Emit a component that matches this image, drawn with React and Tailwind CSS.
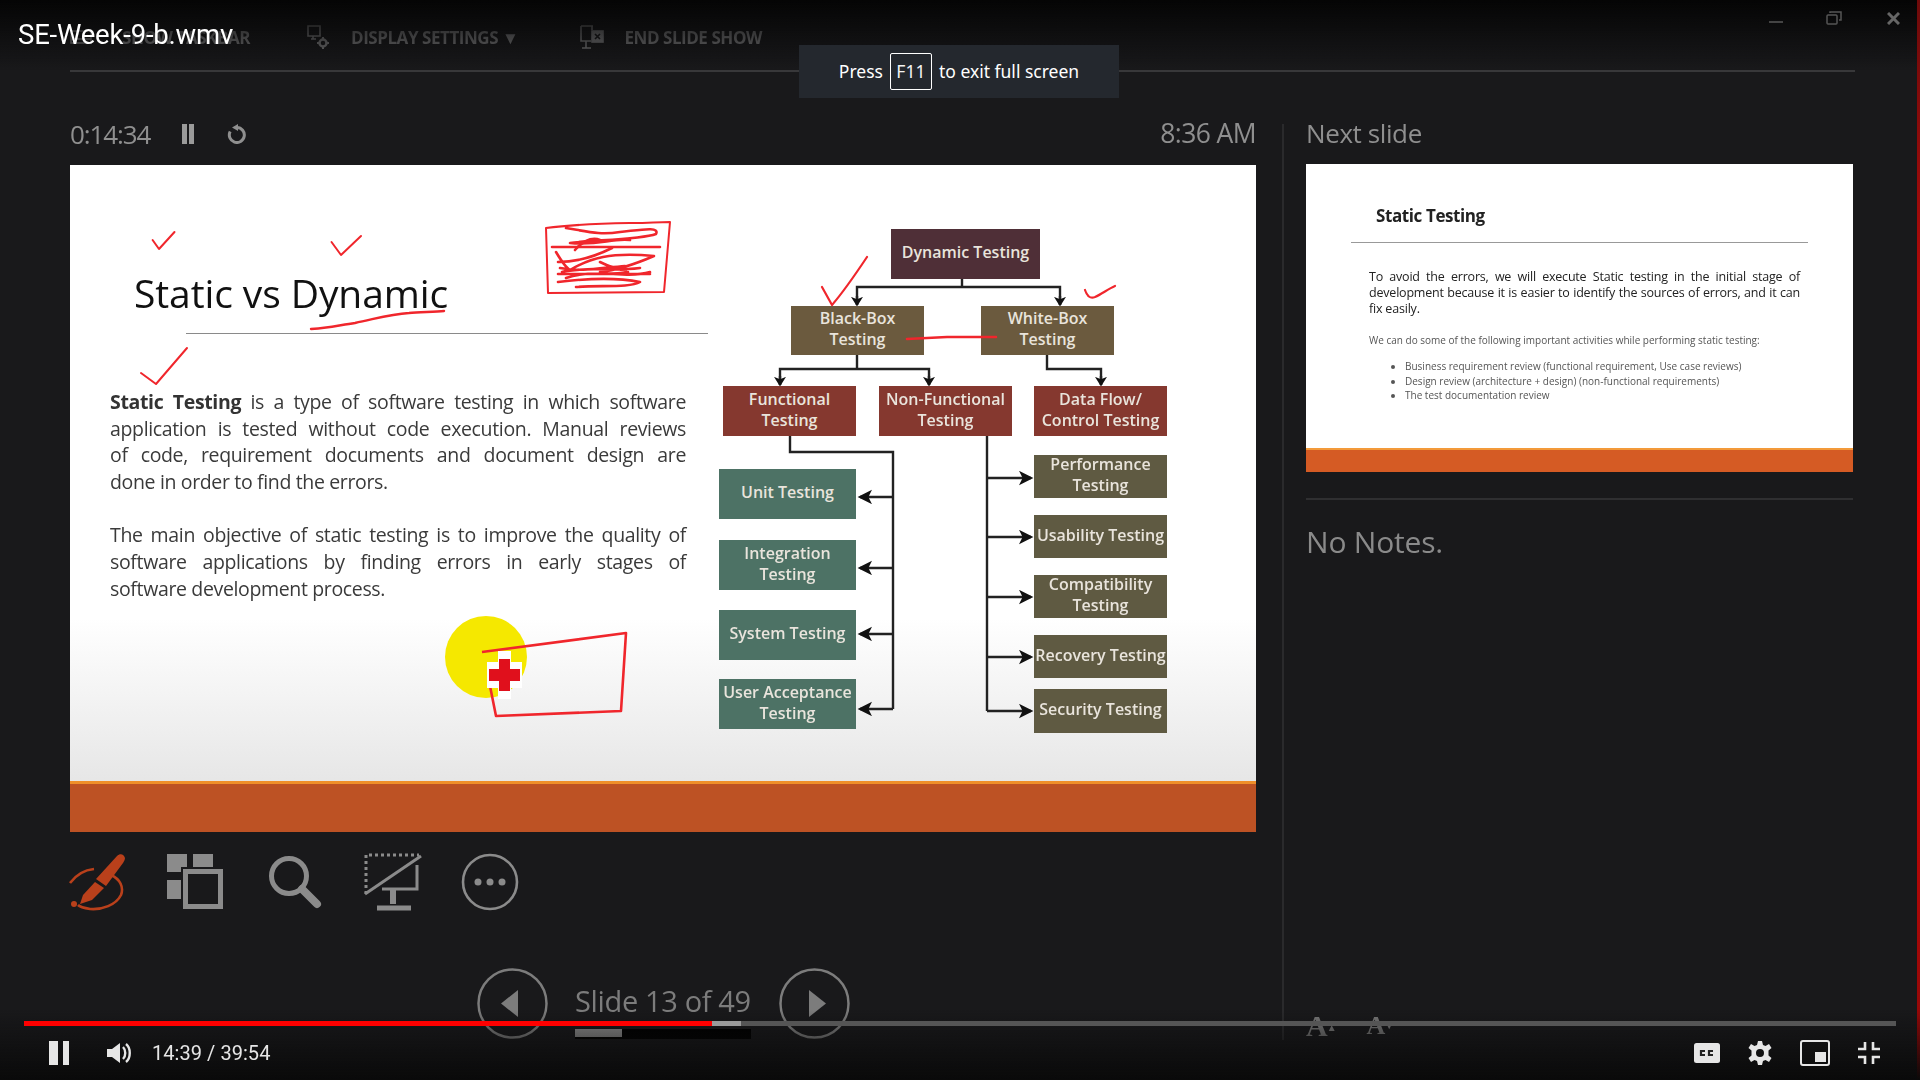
const UI = "font-['Open_Sans',sans-serif]";

function Box({ className, children }) {
  return (
    <div className={`absolute flex items-center justify-center text-center pb-[3px] text-[16px] leading-[21px] font-semibold text-[#e9e4dc] whitespace-nowrap ${className}`}>
      {children}
    </div>
  );
}

// a full-width justified line of the slide text
function Line({ children }) {
  return <span className="block text-justify [text-align-last:justify]">{children}</span>;
}

function Diagram() {
  const black = '#222';
  return (
    <>
      <svg className="absolute inset-0 w-full h-full" viewBox="70 165 1186 667" fill="none">
        <defs>
          <marker id="tip" markerWidth="5" markerHeight="5" refX="3.4" refY="2.5" orient="auto" markerUnits="strokeWidth">
            <path d="M0 0L4 2.5L0 5L1 2.5Z" fill="#111" />
          </marker>
          <marker id="tipBig" markerWidth="7" markerHeight="7" refX="5" refY="3" orient="auto" markerUnits="strokeWidth">
            <path d="M0 0L6 3L0 6L1.5 3Z" fill="#111" />
          </marker>
        </defs>
        <g stroke={black} strokeWidth="2.4">
          <path d="M962 279V287" />
          <path d="M857 305V287H1060V305" />
          <path d="M857 355V369" />
          <path d="M780 385V369H929V385" />
          <path d="M1047 355V369H1101V385" />
          <path d="M790 436V452H893V709" />
          <path d="M987 436V711" />
        </g>
        <g stroke={black} strokeWidth="2.4">
          <path d="M857 296V305" markerEnd="url(#tip)" />
          <path d="M1060 296V305" markerEnd="url(#tip)" />
          <path d="M780 376V385" markerEnd="url(#tip)" />
          <path d="M929 376V385" markerEnd="url(#tip)" />
          <path d="M1101 376V385" markerEnd="url(#tip)" />
          <path d="M893 497H860" markerEnd="url(#tipBig)" />
          <path d="M893 568H860" markerEnd="url(#tipBig)" />
          <path d="M893 634H860" markerEnd="url(#tipBig)" />
          <path d="M893 709H860" markerEnd="url(#tipBig)" />
          <path d="M987 478H1031" markerEnd="url(#tipBig)" />
          <path d="M987 537H1031" markerEnd="url(#tipBig)" />
          <path d="M987 597H1031" markerEnd="url(#tipBig)" />
          <path d="M987 657H1031" markerEnd="url(#tipBig)" />
          <path d="M987 711H1031" markerEnd="url(#tipBig)" />
        </g>
      </svg>

      <Box className="left-[821px] top-[64px] w-[149px] h-[50px] bg-[#4f2f37]">Dynamic Testing</Box>
      <Box className="left-[721px] top-[141px] w-[133px] h-[49px] bg-[#6b5a3e]">Black-Box<br />Testing</Box>
      <Box className="left-[911px] top-[141px] w-[133px] h-[49px] bg-[#6b5a3e]">White-Box<br />Testing</Box>
      <Box className="left-[653px] top-[221px] w-[133px] h-[50px] bg-[#85382f]">Functional<br />Testing</Box>
      <Box className="left-[809px] top-[221px] w-[133px] h-[50px] bg-[#85382f]">Non-Functional<br />Testing</Box>
      <Box className="left-[964px] top-[221px] w-[133px] h-[50px] bg-[#85382f]">Data Flow/<br />Control Testing</Box>

      <Box className="left-[649px] top-[304px] w-[137px] h-[50px] bg-[#4d7265]">Unit Testing</Box>
      <Box className="left-[649px] top-[375px] w-[137px] h-[50px] bg-[#4d7265]">Integration<br />Testing</Box>
      <Box className="left-[649px] top-[445px] w-[137px] h-[50px] bg-[#4d7265]">System Testing</Box>
      <Box className="left-[649px] top-[514px] w-[137px] h-[50px] bg-[#4d7265]">User Acceptance<br />Testing</Box>

      <Box className="left-[964px] top-[290px] w-[133px] h-[43px] bg-[#5f5a42]">Performance<br />Testing</Box>
      <Box className="left-[964px] top-[350px] w-[133px] h-[43px] bg-[#5f5a42]">Usability Testing</Box>
      <Box className="left-[964px] top-[410px] w-[133px] h-[43px] bg-[#5f5a42]">Compatibility<br />Testing</Box>
      <Box className="left-[964px] top-[470px] w-[133px] h-[43px] bg-[#5f5a42]">Recovery Testing</Box>
      <Box className="left-[964px] top-[524px] w-[133px] h-[44px] bg-[#5f5a42]">Security Testing</Box>
    </>
  );
}

// ink the presenter drew on top of the slide
function Ink() {
  return (
    <svg className="absolute inset-0 w-full h-full" viewBox="70 165 1186 667" fill="none" stroke="#f0262c" strokeWidth="2" strokeLinecap="round" strokeLinejoin="round">
      <path d="M152.6 240L159 249L174.5 232" />
      <path d="M331.5 242L341 255L361 236" />
      <path d="M141 373L156 384L187 348" />
      <path d="M311 329C330 328 340 325 355 323C375 319 390 314 409 313C420 312 435 312 444 311" strokeWidth="2.4" />
      <path d="M546 228C590 222 630 224 670 222L664 292L548 293L546 228" />
      <path d="M566 228C590 232 600 235 620 232C640 230 660 226 656 234C640 240 590 240 570 243C600 246 610 238 630 240M552 247H660" strokeWidth="2.6" />
      <path d="M556 252C562 262 566 268 570 270C590 258 610 252 654 256C640 262 620 270 600 272C620 276 640 275 650 272M558 262C580 262 600 254 612 248M558 274H650M558 282C590 278 620 278 640 282C630 288 600 285 576 287M560 268C580 272 600 268 625 266M566 278C590 270 605 276 628 272M600 240C590 236 580 244 575 250M562 272C585 266 610 272 640 268M600 262C612 268 618 270 626 270" strokeWidth="2.6" />
      <path d="M822 287L832 305C845 290 855 275 867 257" strokeWidth="2.2" />
      <path d="M1085 290C1087 296 1090 299 1095 297C1102 294 1108 289 1115 286" strokeWidth="2.2" />
      <path d="M907 339L947 337L996 337" strokeWidth="2.6" />
    </svg>
  );
}

function Cursor() {
  return (
    <>
      <div className="absolute left-[375px] top-[451px] w-[82px] h-[82px] rounded-full bg-[#f5e800]" />
      <svg className="absolute inset-0 w-full h-full" viewBox="70 165 1186 667" fill="none">
        <path d="M482 652L626 633L621 711L496 716L490 686" stroke="#f0262c" strokeWidth="2.6" strokeLinejoin="round" />
        <path d="M498 651H511V662H522V688H511V699H498V688H487V662H498Z" fill="#fff" />
        <path d="M499 659H510V669H520V681H510V691H499V681H489V669H499Z" fill="#e0101c" />
      </svg>
    </>
  );
}

function MainSlide() {
  return (
    <div className="relative h-[667px] bg-gradient-to-b from-white from-[68%] to-[#e6e6e6] to-[93%] font-['Open_Sans',sans-serif] overflow-hidden">
      <div className="pl-[40px] pr-[570px]">
        <h1 className="ml-[24px] pt-[102px] text-[39px] leading-[52px] text-[#111] tracking-[-0.1px] whitespace-nowrap">Static vs Dynamic</h1>
        <div className="ml-[76px] mt-[14px] w-[522px] h-px bg-[#8a8a8a]" />
        <p className="mt-[55px] text-[19.5px] leading-[26.6px] text-[#3a3a3a] tracking-[-0.35px]">
          <Line><b className="text-[#333]">Static Testing</b> is a type of software testing in which software</Line>
          <Line>application is tested without code execution. Manual reviews</Line>
          <Line>of code, requirement documents and document design are</Line>
          done in order to find the errors.
        </p>
        <p className="mt-[27px] text-[19.5px] leading-[26.6px] text-[#3a3a3a] tracking-[-0.35px]">
          <Line>The main objective of static testing is to improve the quality of</Line>
          <Line>software applications by finding errors in early stages of</Line>
          software development process.
        </p>
      </div>
      <Diagram />
      <Cursor />
      <Ink />
      <div className="absolute left-0 right-0 bottom-0 h-[51px] bg-[#bd5224] border-t-[3px] border-[#ef8f2a]" />
    </div>
  );
}

function NextSlide() {
  return (
    <div className="h-[308px] bg-white flex flex-col font-['Open_Sans',sans-serif]">
      <div className="flex-1 px-[54px] overflow-hidden">
        <div className="ml-[16px] pt-[40px] text-[17px] leading-[24px] font-bold text-[#222] tracking-[-0.4px]">Static Testing</div>
        <div className="-mx-[9px] mt-[14px] h-px bg-[#999]" />
        <p className="ml-[9px] -mr-[1px] mt-[26px] text-[12.5px] leading-[16px] text-[#222] tracking-[-0.2px]">
          <Line>To avoid the errors, we will execute Static testing in the initial stage of</Line>
          <Line>development because it is easier to identify the sources of errors, and it can</Line>
          fix easily.
        </p>
        <p className="ml-[9px] mt-[16px] text-[10px] leading-[14px] text-[#555]">We can do some of the following important activities while performing static testing:</p>
        <ul className="ml-[45px] mt-[12px] list-disc text-[10px] leading-[14.5px] text-[#555]">
          <li>Business requirement review (functional requirement, Use case reviews)</li>
          <li>Design review (architecture + design) (non-functional requirements)</li>
          <li>The test documentation review</li>
        </ul>
      </div>
      <div className="h-[24px] bg-[#d55b24] border-t-[2px] border-[#f39a3a]" />
    </div>
  );
}

function Toolbar() {
  return (
    <div className="mx-[70px] mr-[65px] h-[72px] border-b-2 border-[#38383a] flex items-center gap-[61px] pt-[5px] text-[#707072] text-[17px] font-bold tracking-[-0.45px]">
      <div className="flex items-center gap-[30px] w-[175px] whitespace-nowrap">
        <svg width="22" height="20" viewBox="0 0 22 20" fill="none" stroke="currentColor" strokeWidth="1.6" className="shrink-0"><rect x="1" y="3" width="20" height="12" /><path d="M1 11H21" /></svg>
        <span>SHOW TASKBAR</span>
      </div>
      <div className="flex items-center gap-[21px]">
        <svg width="24" height="26" viewBox="0 0 24 26" fill="none" stroke="currentColor" strokeWidth="1.6"><path d="M2 1H14V11H2ZM5 14H10M7 11V14" /><circle cx="17" cy="18" r="3.5" strokeWidth="2.5" /><path d="M17 12V14M17 22V24M11 18H13M21 18H23" strokeWidth="2" /></svg>
        <span>DISPLAY SETTINGS ▼</span>
      </div>
      <div className="flex items-center gap-[20px] ml-[1px]">
        <svg width="24" height="26" viewBox="0 0 24 26" fill="none" stroke="currentColor" strokeWidth="1.6"><path d="M1 1H13M12 1V5M1 1V16H11M6 16V23M2 23H11" /><rect x="12" y="6" width="11" height="11" fill="currentColor" /><path d="M15 9L20 14M20 9L15 14" stroke="#19191b" /></svg>
        <span>END SLIDE SHOW</span>
      </div>
    </div>
  );
}

function SlideTools() {
  return (
    <div className="mt-[21px] h-[58px] flex items-center text-[#8b8b8b]">
      <svg className="w-[58px] h-[58px] text-[#b9401b] -ml-[2px]" viewBox="0 0 58 58" fill="none">
        <path d="M2 30C8 22 16 17 26 16" stroke="currentColor" strokeWidth="2.6" />
        <path d="M43 22C52 26 56 34 53 42C48 52 34 57 22 56C16 55 12 54 10 52" stroke="currentColor" strokeWidth="2.6" />
        <path d="M49 3C52 0 56 1 57 5C57 7 56 8 55 10L38 33L28 26Z" fill="currentColor" />
        <path d="M27 29L36 35L24 47L12 51L15 42Z" fill="currentColor" />
        <circle cx="6" cy="51" r="3" fill="currentColor" />
      </svg>
      <svg className="ml-[41px] w-[56px] h-[56px]" viewBox="0 0 56 56" fill="currentColor">
        <rect x="0" y="0" width="20" height="13" />
        <rect x="0" y="0" width="14" height="18" />
        <rect x="26" y="0" width="20" height="13" />
        <rect x="0" y="26" width="14" height="19" />
        <path fillRule="evenodd" d="M16 15H56V55H16ZM21 20V50H51V20Z" />
      </svg>
      <svg className="ml-[45px] w-[54px] h-[54px]" viewBox="0 0 54 54" fill="none" stroke="currentColor">
        <circle cx="21" cy="21" r="17.5" strokeWidth="5" />
        <path d="M34 34L49 49" strokeWidth="8" strokeLinecap="round" />
      </svg>
      <svg className="ml-[42px] w-[58px] h-[58px]" viewBox="0 0 58 58" fill="none" stroke="currentColor">
        <path d="M2 41V2H55" strokeWidth="3" strokeDasharray="3 3" />
        <path d="M1 41L57 3" strokeWidth="3" />
        <path d="M53 12V36H18" strokeWidth="3" />
        <path d="M29 36V51" strokeWidth="6" />
        <path d="M13 55H47" strokeWidth="5" />
      </svg>
      <svg className="ml-[39px] w-[58px] h-[58px]" viewBox="0 0 58 58" fill="none" stroke="currentColor">
        <circle cx="29" cy="29" r="27" strokeWidth="2.6" />
        <circle cx="17" cy="29" r="3.5" fill="currentColor" stroke="none" />
        <circle cx="29" cy="29" r="3.5" fill="currentColor" stroke="none" />
        <circle cx="41" cy="29" r="3.5" fill="currentColor" stroke="none" />
      </svg>
    </div>
  );
}

function SlideNav() {
  return (
    <div className="ml-[407px] mt-[57px] flex items-start text-[#7c7c7c]">
      <svg className="w-[71px] h-[71px]" viewBox="0 0 71 71" fill="none">
        <circle cx="35.5" cy="35.5" r="34" stroke="currentColor" strokeWidth="2.5" />
        <path d="M41 22V49L24 35.5Z" fill="currentColor" />
      </svg>
      <div className="ml-[27px] w-[176px] pt-[14px]">
        <div className="text-[29px] leading-[38px] whitespace-nowrap tracking-[-0.35px]">Slide 13 of 49</div>
        <div className="mt-[9px] h-[10px] bg-black">
          <div className="w-[47px] h-[8px] bg-[#8a8a8a]" />
        </div>
      </div>
      <svg className="ml-[28px] w-[71px] h-[71px]" viewBox="0 0 71 71" fill="none">
        <circle cx="35.5" cy="35.5" r="34" stroke="currentColor" strokeWidth="2.5" />
        <path d="M30 22V49L47 35.5Z" fill="currentColor" />
      </svg>
    </div>
  );
}

function PlayerBar() {
  return (
    <div className="absolute left-0 right-0 bottom-0 h-[70px] bg-gradient-to-b from-transparent to-[#0a0a0a] font-['Roboto',sans-serif]">
      <div className="mt-[11px] mx-[24px] h-[5px] flex bg-[#555] w-[1872px]">
        <div className="w-[688px] bg-[#ff0000]" />
        <div className="w-[29px] bg-[#9a9a9a]" />
      </div>
      <div className="flex items-center h-[54px] pl-[49px] pr-[40px] text-[#e6e6e6]">
        <div className="flex gap-[5px]">
          <div className="w-[9px] h-[24px] bg-[#e6e6e6]" />
          <div className="w-[6px] h-[24px] bg-[#e6e6e6]" />
        </div>
        <svg className="ml-[38px] w-[24px] h-[20px]" viewBox="0 0 24 20" fill="currentColor">
          <path d="M0 6H5L13 0V20L5 14H0Z" />
          <path d="M16 4C19 7 19 13 16 16M19 1C24 5 24 15 19 19" fill="none" stroke="currentColor" strokeWidth="2.4" />
        </svg>
        <span className="ml-[21px] text-[20px] tracking-[0.05px]">14:39 / 39:54</span>
        <div className="ml-auto flex items-center">
          <svg className="w-[26px] h-[20px]" viewBox="0 0 26 20">
            <rect width="26" height="20" rx="2.5" fill="currentColor" />
            <path d="M11 8H7V12H11M19 8H15V12H19" fill="none" stroke="#222" strokeWidth="2.2" />
          </svg>
          <svg className="ml-[28px] w-[24px] h-[24px]" viewBox="0 0 24 24" fill="currentColor">
            <path fillRule="evenodd" d="M10 0H14L15 4L17.5 5L21 3L23.5 7L20.5 9.5V14.5L23.5 17L21 21L17.5 19L15 20L14 24H10L9 20L6.5 19L3 21L0.5 17L3.5 14.5V9.5L0.5 7L3 3L6.5 5L9 4ZM12 8A4 4 0 1 0 12 16A4 4 0 1 0 12 8Z" />
          </svg>
          <svg className="ml-[28px] w-[30px] h-[26px]" viewBox="0 0 30 26" fill="none">
            <rect x="1" y="1" width="28" height="24" rx="2" stroke="currentColor" strokeWidth="2" />
            <rect x="15" y="12" width="11" height="10" fill="currentColor" />
          </svg>
          <svg className="ml-[28px] w-[22px] h-[22px]" viewBox="0 0 22 22" fill="none" stroke="currentColor" strokeWidth="2.6">
            <path d="M7 0V7H0M15 0V7H22M7 22V15H0M15 22V15H22" />
          </svg>
        </div>
      </div>
    </div>
  );
}

export default function App() {
  return (
    <div className="relative w-[1920px] h-[1080px] overflow-hidden bg-[#19191b]">
      {/* the presenter view that plays inside the video */}
      <div className={`absolute inset-0 flex flex-col blur-[0.4px] ${UI}`}>
        <Toolbar />
        <div className="flex flex-1">
          <div className="ml-[70px] w-[1186px]">
            <div className="h-[93px] flex items-center pt-[31px] text-[#8f8f8f]">
              <span className="text-[26px] tracking-[-1.1px]">0:14:34</span>
              <div className="ml-[32px] flex gap-[2px]">
                <div className="w-[5px] h-[20px] bg-[#9a9a9a]" />
                <div className="w-[5px] h-[20px] bg-[#9a9a9a]" />
              </div>
              <svg className="ml-[33px] w-[20px] h-[20px]" viewBox="0 0 20 20" fill="none" stroke="currentColor" strokeWidth="3">
                <path d="M10 3.5A7.5 7.5 0 1 1 3.2 7.5" />
                <path d="M11 0V7L5 3.5Z" fill="currentColor" stroke="none" />
              </svg>
              <span className="ml-auto text-[26.5px] tracking-[-0.6px]">8:36 AM</span>
            </div>
            <MainSlide />
            <SlideTools />
            <SlideNav />
          </div>
          <div className="ml-[26px] mt-[52px] w-[2px] h-[916px] bg-[#2a2a2c]" />
          <div className="ml-[22px] w-[547px]">
            <div className="h-[92px] pt-[43px] text-[26px] leading-[36px] text-[#8f8f8f] tracking-[-0.4px]">Next slide</div>
            <NextSlide />
            <div className="mt-[26px] h-[2px] bg-[#2f2f31]" />
            <div className="mt-[21px] text-[30px] leading-[42px] text-[#8a8a8a] tracking-[-0.2px]">No Notes.</div>
            <div className="mt-[449px] flex items-start gap-[30px] font-['Liberation_Serif',serif] font-bold text-[#777]">
              <span className="text-[30px] leading-[28px]">A<sup className="text-[10px] -ml-[1px]">▲</sup></span>
              <span className="text-[26px] leading-[28px]">A<sup className="text-[10px] -ml-[1px]">▼</sup></span>
            </div>
          </div>
        </div>
      </div>

      {/* youtube overlays */}
      <div className="absolute left-0 right-0 top-0 h-[70px] bg-gradient-to-b from-[#050505] to-transparent" />
      <div className="absolute left-[18px] top-[18px] text-[27.5px] leading-[34px] text-white font-['Roboto',sans-serif] tracking-[-0.2px]">SE-Week-9-b.wmv</div>
      <div className="absolute top-0 right-[20px] w-[131px] h-[30px] text-[#555]">
        <div className="absolute left-0 top-[21px] w-[14px] h-[2px] bg-[#444]" />
        <svg className="absolute left-[57px] top-[10px] w-[16px] h-[16px]" viewBox="0 0 16 16" fill="none" stroke="currentColor" strokeWidth="1.5">
          <rect x="1" y="5" width="10" height="9" rx="1" /><path d="M4 3V2H15V10H13" />
        </svg>
        <svg className="absolute left-[118px] top-[12px] w-[13px] h-[13px]" viewBox="0 0 13 13" stroke="#666" strokeWidth="3">
          <path d="M1 1L12 12M12 1L1 12" />
        </svg>
      </div>
      <div className="absolute right-0 top-0 w-[3px] h-[1080px] bg-gradient-to-b from-[#6e0a0a] via-[#f00000] via-50% to-[#8a0808]" />

      <div className="absolute left-[799px] top-[45px] w-[320px] h-[53px] bg-[#24282e] flex items-center justify-center text-[17.5px] text-white font-['Noto_Sans',sans-serif]">
        <span>Press</span>
        <span className="mx-[7px] w-[42px] h-[37px] flex items-center justify-center border border-white rounded-[2px] text-[#f3f3f3]">F11</span>
        <span>to exit full screen</span>
      </div>

      <PlayerBar />
    </div>
  );
}
